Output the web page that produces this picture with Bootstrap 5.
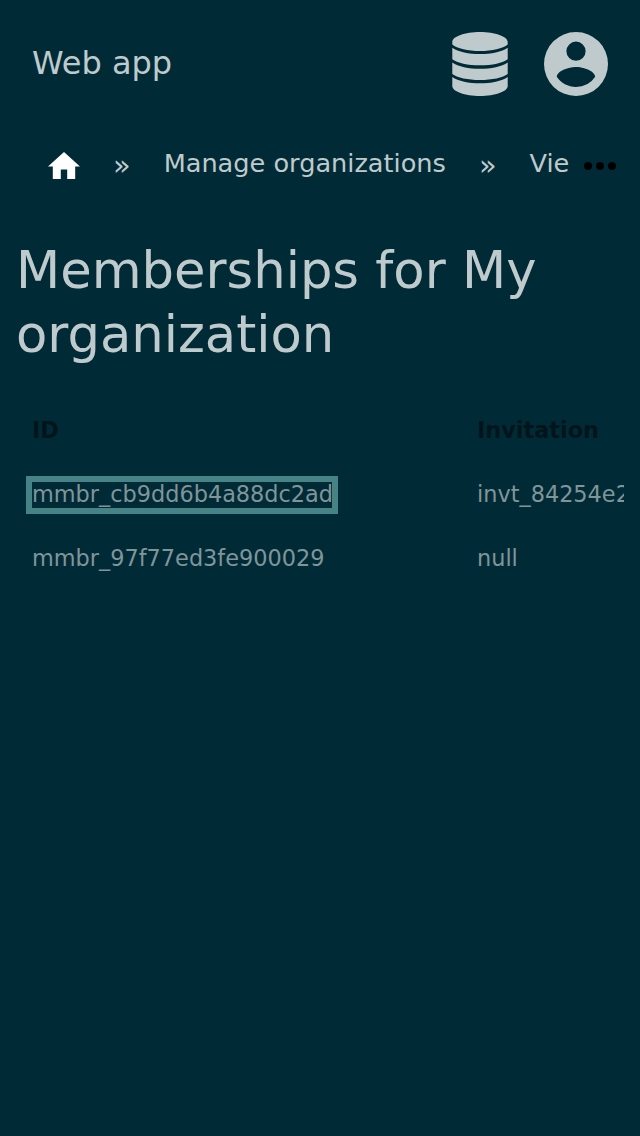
<!DOCTYPE html>
<html lang="en">
<head>
<meta charset="utf-8">
<meta name="viewport" content="width=device-width, initial-scale=1">
<title>Web app</title>
<link href="https://cdn.jsdelivr.net/npm/bootstrap@5.3.0/dist/css/bootstrap.min.css" rel="stylesheet">
<style>
body{background:#002b36;color:#bfcacd;font-family:"DejaVu Sans",sans-serif;min-height:1136px;overflow:hidden}
.topbar{height:128px;padding:0 32px}
.brand{font-size:32px;line-height:48px;padding-bottom:2px}
.tools{gap:36px}
.crumbs{height:72px;font-size:25.6px;line-height:38px;padding:16px 24px 0 48px}
.crumbs-list{width:521px;overflow:hidden}
.home-icon{margin-top:8px}
.sep{margin:0 33px;font-size:28.8px;line-height:42px}
.more-icon{margin-top:18px}
.title{font-size:51.2px;line-height:64px;font-weight:400;padding:38px 16px 0;height:198px;margin:0}
.scroller{margin:0 16px;overflow:hidden}
.members{width:900px;table-layout:fixed;font-size:22.4px;line-height:32px;color:#7f959a;margin:0}
.members th,.members td{padding:16px;height:64px;white-space:nowrap}
.members th{color:#00151b}
.members th:first-child{width:445px}
.members a{color:inherit;text-decoration:none}
.members a.current{display:inline-block;width:300px;line-height:24px;padding-bottom:2px;outline:6.4px solid #468386}
</style>
</head>
<body>
<header class="topbar d-flex align-items-center justify-content-between">
<div class="brand">Web app</div>
<div class="tools d-flex align-items-center">
<svg width="56" height="64" viewBox="0 0 56 64" fill="#bfcacd"><path d="M.3 10C.3 4.500 13 0 28 0s27.700 4.500 27.700 10v2.500C51 16.500 40 19 28 19S5 16.500.3 12.500zM.3 15.700C6 19.800 17 22 28 22s22-2.200 27.700-6.300v11.500C51 31 40 33.300 28 33.300S5 31 .3 27.200zM.3 30.400C6 34.500 17 36.700 28 36.700s22-2.200 27.700-6.300v11.500C51 45.700 40 47.900 28 47.900S5 45.700.3 41.900zM.3 45C6 49.100 17 51.300 28 51.300S50 49.100 55.700 45v9c0 5.500-12.700 10-27.700 10S.3 59.500.3 54z"/></svg>
<svg width="64" height="64" viewBox="2 2 20 20" fill="#bfcacd"><path d="M12 19.200c-2.500 0-4.710-1.280-6-3.200.030-2 4-3.100 6-3.100s5.970 1.100 6 3.100a7.230 7.230 0 0 1-6 3.200M12 5a3 3 0 0 1 3 3 3 3 0 0 1-3 3 3 3 0 0 1-3-3 3 3 0 0 1 3-3m0-3A10 10 0 0 0 2 12a10 10 0 0 0 10 10 10 10 0 0 0 10-10A10 10 0 0 0 12 2z"/></svg>
</div>
</header>
<nav class="crumbs d-flex align-items-start justify-content-between">
<div class="crumbs-list d-flex align-items-start text-nowrap">
<svg class="home-icon flex-shrink-0" width="32" height="27.200" viewBox="2 3 20 17" fill="#fff"><path d="M10 20v-6h4v6h5v-8h3L12 3 2 12h3v8z"/></svg>
<span class="sep">»</span><span>Manage organizations</span><span class="sep">»</span><span>Vie</span>
</div>
<svg class="more-icon" width="32" height="8" viewBox="0 0 32 8"><circle cx="4" cy="4" r="4"/><circle cx="16" cy="4" r="4"/><circle cx="28" cy="4" r="4"/></svg>
</nav>
<main>
<h1 class="title">Memberships for My organization</h1>
<div class="scroller"><table class="members"><thead><tr><th>ID</th><th>Invitation</th></tr></thead>
<tbody><tr><td><a class="current" href="#">mmbr_cb9dd6b4a88dc2ad</a></td><td>invt_84254e2f</td></tr><tr><td><a href="#">mmbr_97f77ed3fe900029</a></td><td>null</td></tr></tbody></table></div>
</main>
<script src="https://cdn.jsdelivr.net/npm/bootstrap@5.3.0/dist/js/bootstrap.bundle.min.js"></script>
</body>
</html>
